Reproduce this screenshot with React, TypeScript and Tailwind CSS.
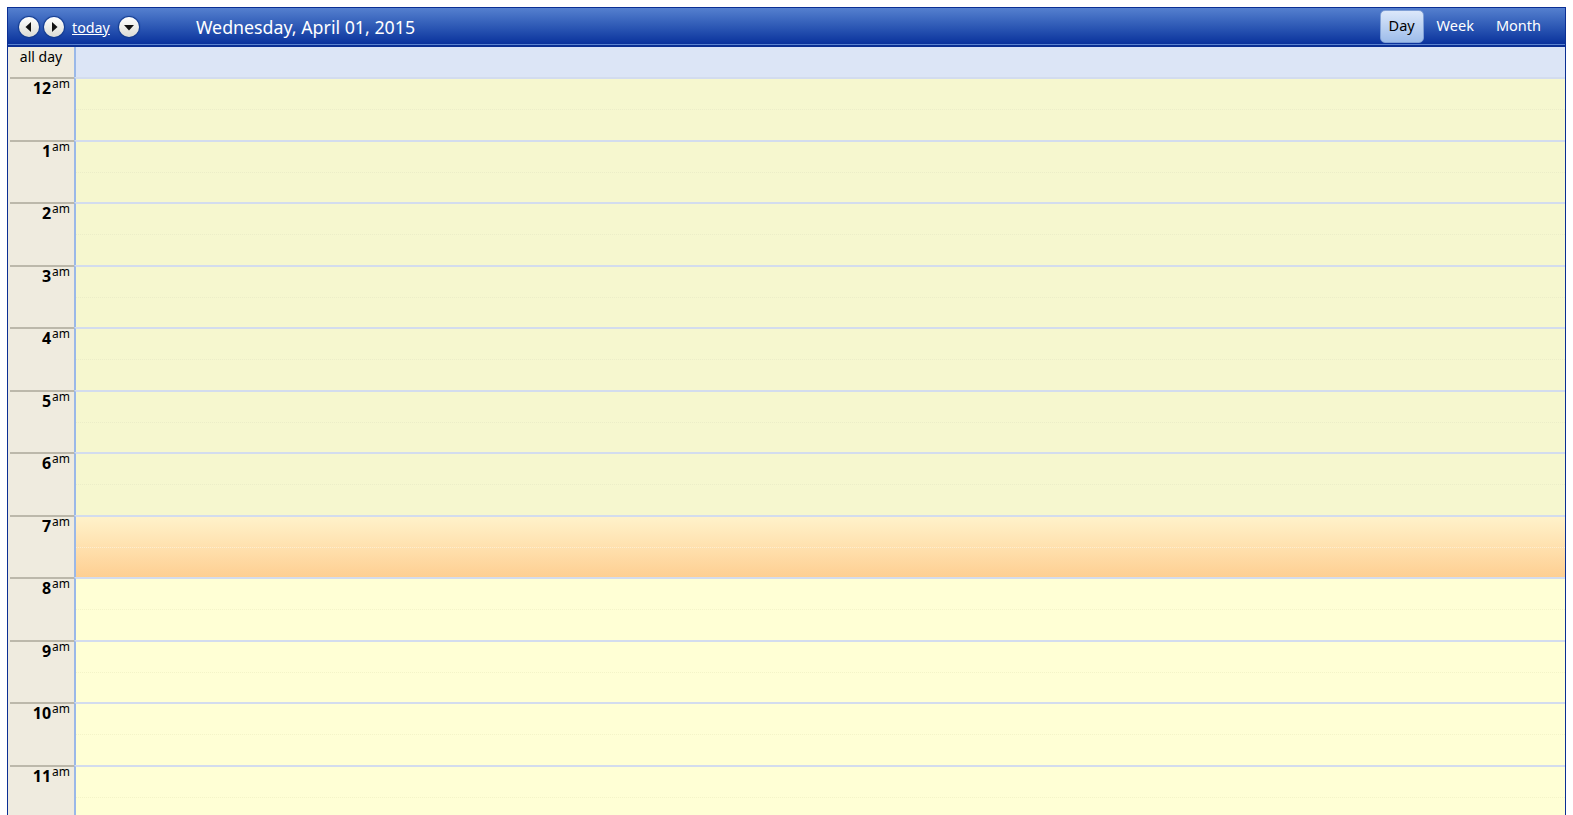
const HOURS = ["12", "1", "2", "3", "4", "5", "6", "7", "8", "9", "10", "11"];

function RoundButton({ dir }: { dir: "left" | "right" | "down" }) {
  return (
    <span className="flex h-[20px] w-[20px] items-center justify-center rounded-full bg-gradient-to-b from-white to-[#dcdcd4] shadow-[0_0_1px_1px_#123a8c]">
      <svg width="12" height="12" viewBox="0 0 12 12">
        {dir === "left" && <path d="M8 1 L8 11 L2.5 6 Z" fill="#111" />}
        {dir === "right" && <path d="M4 1 L4 11 L9.5 6 Z" fill="#111" />}
        {dir === "down" && <path d="M1 4 L11 4 L6 9.5 Z" fill="#111" />}
      </svg>
    </span>
  );
}

function HourRow({ hour, index }: { hour: string; index: number }) {
  // 0-6 night, 7 is the dawn band, rest is working hours
  const bg =
    index < 7
      ? "bg-[#f6f7cf]"
      : index === 7
        ? "bg-gradient-to-b from-[#fff2ca] to-[#fecf92]"
        : "bg-[#ffffd5]";
  const dash = index === 7 ? "border-[#fdeed0]" : index < 7 ? "border-[#ecedc8]" : "border-[#f4f4c8]";

  return (
    <div className="flex h-[62.5px] shrink-0">
      <div className="w-[66px] shrink-0 pl-[2px]">
        <div className="flex h-full justify-end border-t-2 border-[#bcb8ab] pr-[4px] text-black">
          <span className="mt-[-2px] text-[16px] leading-[22px] font-bold">{hour}</span>
          <span className="ml-[1px] mt-[-3px] text-[12px] leading-[16px]">am</span>
        </div>
      </div>
      <div className={`flex flex-1 flex-col border-t-2 border-l-2 border-t-[#d3dcee] border-l-[#9ab8e8] ${bg}`}>
        <div className={`mt-[30px] border-t border-dotted ${dash}`} />
      </div>
    </div>
  );
}

export default function App() {
  return (
    <div className="h-screen overflow-hidden bg-white pt-[7px] pl-[7px] pr-[7px] font-['Noto_Sans',sans-serif]">
      <div className="h-[900px] w-[1559px] border border-b-0 border-[#0b2f94]">
        {/* toolbar */}
        <div className="flex h-[37px] items-center border-b border-[#5b83cf] bg-gradient-to-b from-[#5580cf] to-[#0a319c] pl-[11px] pt-[2px] text-white">
          <div className="flex items-center gap-[5px]">
            <RoundButton dir="left" />
            <RoundButton dir="right" />
          </div>
          <a className="ml-[8px] mt-[1px] text-[14.3px] underline">today</a>
          <span className="ml-[9px]">
            <RoundButton dir="down" />
          </span>
          <span className="ml-[57px] mt-[1px] text-[17.8px]">Wednesday, April 01, 2015</span>
          <div className="mt-[-2px] ml-auto flex items-center pr-[24px] text-[14.5px]">
            <span className="flex h-[33px] w-[44px] items-center justify-center rounded-[5px] border border-[#7f9fd6] bg-gradient-to-b from-[#dce8fa] to-[#9dbce9] text-black">
              Day
            </span>
            <span className="ml-[13px]">Week</span>
            <span className="ml-[22px]">Month</span>
          </div>
        </div>
        {/* all day row */}
        <div className="flex h-[32px] border-t-2 border-[#0b2f94]">
          <div className="w-[66px] shrink-0 bg-[#efebdf] text-center text-[14px] leading-[20px] text-black">all day</div>
          <div className="flex-1 border-l-2 border-[#9ab8e8] bg-[#dce5f6]" />
        </div>
        {/* hours */}
        <div className="flex flex-col bg-[#efebdf]">
          {HOURS.map((hour, i) => (
            <HourRow key={hour} hour={hour} index={i} />
          ))}
        </div>
      </div>
    </div>
  );
}
